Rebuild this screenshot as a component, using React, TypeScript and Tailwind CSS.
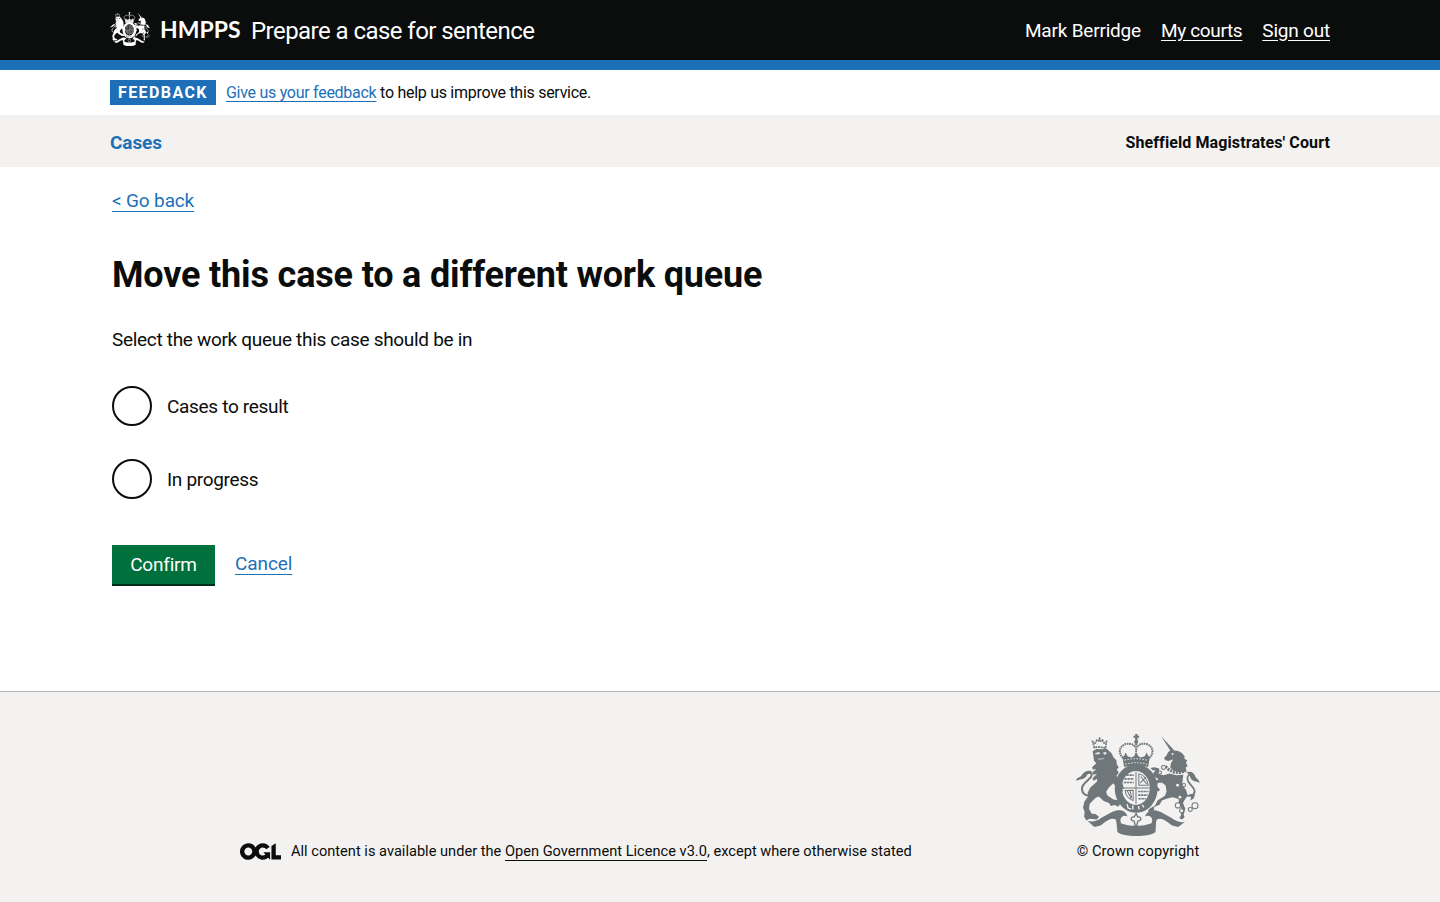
import React from 'react';

function Crest({ className, detail }: { className: string; detail: string }) {
  return (
    <svg className={className} viewBox="33 27 371 307" preserveAspectRatio="none" fill="currentColor" aria-hidden="true">
      {/* crown */}
      <path d="M210 27h7v5h5v6h-5v9h-7v-9h-5v-6h5z" />
      <circle cx="213" cy="51" r="6" />
      <g fill="none" stroke="currentColor" strokeWidth="6" strokeDasharray="5 2">
        <path d="M174 99c-16-14-12-36 8-42c14-3 25 2 28 10" />
        <path d="M252 99c16-14 12-36-8-42c-14-3-25 2-28 10" />
        <path d="M213 56v34" />
      </g>
      <path d="M172 96l5-3 4-10 7 12 12 3 7-5 6-10 6 10 7 5 12-3 7-12 4 10 5 3-5 30c-24-7-48-7-72 0z" />
      <path d="M178 106c23-6 47-6 70 0M180 118c22-6 44-6 66 0" fill="none" stroke={detail} strokeWidth="3" strokeDasharray="5 4" opacity=".8" />
      {/* garter and shield */}
      <path fillRule="evenodd" d="M213 118a64 73 0 1 0 .1 0zM212 138a42 51 0 1 1-.1 0z" />
      <path d="M211 141h3v96h-3zM170 188h85v3h-85z" />
      <g fill="none" stroke="currentColor" strokeWidth="5">
        <path d="M184 151h22M178 162h28M176 173h30M219 200h31M219 211h29M220 222h22" strokeDasharray="7 2" />
        <path d="M221 147c12 2 24 12 28 34h-28zM225 175l17-18M227 155l17 22" strokeWidth="3" />
        <path d="M180 197c2 17 8 25 24 30v-31zM186 197l12 25M194 197l6 22" strokeWidth="3" />
      </g>
      <path d="M177 234l20 9 30 0 14-6 3 14-16 8-20 1-28-8z" />
      <path d="M186 238l3 12 9 3m5-11v12m17-10l2 10m9-14l5 8" fill="none" stroke={detail} strokeWidth="4" />
      {/* lion */}
      <path d="M88 68l-5-18 8 4 5-9 8 5 8-5 5 9 7-4-3 20c-11-4-22-5-33-2z" fill="none" stroke="currentColor" strokeWidth="5" strokeDasharray="6 2" />
      <path d="M101 37h5v10h-5z" />
      <path d="M83 78l12-6 18 1 11-2 8 7 8 8 5 11 9 9 1 12 6 10-6 5 6 11-7 9 7 14 11 8 5 18-5-2 2 11-8-7-5 6-8-12-8-14-13 12-9 14 4 11 18 12 12 2 8 12-6 8-10-5-12 3-5-9-16-6-15-14-9 4-18 18-2 16 8 14 11 1 11 8-7 8-21-2-10 5-7-12 2-14-5-12 4-18 11-16-1-12 8-15 20-18 0-8-11 6-3-7 14-14-10 3-5-6 12-11-10 1-2-7 13-12-7-7z" />
      <path d="M90 85l10-4 7 4-8 4-8-1zM114 82l8-1 4 5-9 4z" fill={detail} opacity=".85" />
      <path d="M97 101l20-2 1 3-16 3z" fill={detail} opacity=".5" />
      <path d="M72 213c-14-1-21-10-21-22c0-18 28-27 29-41c0-9-11-8-21-1" fill="none" stroke="currentColor" strokeWidth="6" />
      <path d="M82 139c-18-6-27 5-32 12c-5 8-15 5-17 17c10-5 22-2 30-12c4-8 5-11 19-17z" />
      {/* unicorn */}
      <path d="M288 34l35 38-7 6z" />
      <path d="M309 81l7-5 4-6 7 7 12 1 11 6 8 10-1 7 9 6-4 6 5 11-6 4 3 12-10 2-17-1-13-4-9-9 2-13 7-12-14 5-9-2-5-6 8-9z" />
      <circle cx="322" cy="87" r="3" fill={detail} />
      <path d="M301 125l11 10 15 7 18 1 14-4" fill="none" stroke="currentColor" strokeWidth="9" strokeDasharray="6 3" />
      <path d="M296 151l16-5 22 5 20-1-2 16-1 14 12 17 4 15-9 14-5 9 7 17-5 19 3 6-7 7-9-4 5-8 2-21-9-16 1-12-19-6-18 5-14 5-7 13-16 7-1 9-9 6-9-3 6-8 15-8 8-16 22-14 5-13-3-18-10-8-13 0-3 10 9 10-3 6-10-5-6-16 4-10 11-6-13-8-3-10 7-9-9 0-6-7 11-2 15 4-1 9-4 7z" />
      <g fill={detail} stroke="currentColor" strokeWidth="3">
        <circle cx="295" cy="128" r="6" /><circle cx="284" cy="143" r="5" /><circle cx="337" cy="181" r="6" />
        <circle cx="356" cy="181" r="5" /><circle cx="344" cy="217" r="6" /><circle cx="338" cy="242" r="8" />
        <circle cx="349" cy="258" r="6" /><circle cx="375" cy="254" r="6" /><circle cx="389" cy="243" r="9" />
      </g>
      <path d="M361 212c20 5 30-5 26-17c-5-14-25-22-20-39c3-9 12-9 20-2" fill="none" stroke="currentColor" strokeWidth="5" />
      <path d="M363 143c15-6 24 2 27 12c4 8 11 8 13 19c-12-6-20-3-27-14c-3-8-4-11-13-17zM369 207l9 6-3 14 10-6 4-12z" />
      {/* fleur and ribbon */}
      <path d="M213 266l5 11c9-3 13 8 4 11l-4 1-3 14h-5l-3-14-4-1c-9-3-5-14 4-11z" fill="none" stroke="currentColor" strokeWidth="4" />
      <path d="M67 288c14 5 28 2 42-9l33-18c19-9 40-6 45 14c-10-5-21 1-21 11l3 21-11-8-6-15c-17-6-28 6-42 16c-8 5-17 6-23 6z" />
      <path d="M358 292c-14 2-26-3-40-13l-33-18c-19-9-40-6-45 14c10-5 21 1 21 11l-3 21 11-8 6-15c17-6 28 6 42 16c8 5 17 6 23 6z" />
      <path d="M153 284c18 26 102 26 120 0l-2 38c-16 16-98 16-114 0z" />
    </svg>
  );
}

function OglLogo() {
  return (
    <svg className="h-[17px] w-[41px] shrink-0" viewBox="0 0 483.2 195.7" fill="currentColor" aria-hidden="true">
      <path d="M421.5 142.8V.1l-50.7 32.3v161.1h112.4v-50.7zm-122.3-9.6A47.12 47.12 0 0 1 221 97.8c0-26 21.1-47.1 47.1-47.1 16.7 0 31.4 8.7 39.7 21.8l42.7-27.2A97.63 97.63 0 0 0 268.1 0c-36.5 0-68.3 20.1-85.1 49.7A98 98 0 0 0 97.8 0C43.9 0 0 43.9 0 97.8s43.9 97.8 97.8 97.8c36.5 0 68.3-20.1 85.1-49.7a97.76 97.76 0 0 0 149.6 25.4l19.4 22.2h3v-87.8h-80l24.3 27.5zM97.8 145c-26 0-47.1-21.1-47.1-47.1s21.1-47.1 47.1-47.1 47.1 21.1 47.1 47.1S123.8 145 97.8 145" />
    </svg>
  );
}

function Radio({ label }: { label: string }) {
  return (
    <label className="flex h-10 items-center gap-[15px]">
      <input type="radio" name="queue" className="size-10 shrink-0 appearance-none rounded-full border-2 border-[#0b0c0c]" />
      <span className="tracking-[-0.32px]">{label}</span>
    </label>
  );
}

export default function App() {
  return (
    <div className="flex h-[902px] flex-col bg-white font-['Roboto',sans-serif] text-[19px] leading-[25px] whitespace-nowrap text-[#0b0c0c]">
      <header className="h-[70px] shrink-0 border-b-10 border-[#1d70b8] bg-[#0b0c0c] text-white">
        <div className="mx-auto flex h-[60px] w-[1220px] items-center">
          <Crest className="mb-[2px] h-[34px] w-10" detail="#0b0c0c" />
          <span className="ml-[10px] w-[81px] pb-px font-['Lato',sans-serif] text-[23px] font-bold">HMPPS</span>
          <span className="ml-[10px] pt-[3px] text-[24px] tracking-[-0.55px]">Prepare a case for sentence</span>
          <nav className="ml-auto flex gap-5 tracking-[-0.2px]">
            <span>Mark Berridge</span>
            <a href="#" className="tracking-[-0.35px] underline underline-offset-3">My courts</a>
            <a href="#" className="underline underline-offset-3">Sign out</a>
          </nav>
        </div>
      </header>

      <div className="mx-auto flex h-[45px] w-[1220px] shrink-0 items-center">
        <strong className="flex h-[25px] w-[106px] items-center bg-[#1d70b8] pl-[8px] text-[16px] font-bold tracking-[1.4px] text-white">FEEDBACK</strong>
        <p className="ml-[10px] text-[16px] tracking-[-0.28px]">
          <a href="#" className="text-[#1d70b8] underline underline-offset-3">Give us your feedback</a> to help us improve this service.
        </p>
      </div>

      <div className="h-[52px] shrink-0 bg-[#f3f2f1]">
        <div className="mx-auto flex h-full w-[1220px] items-center justify-between pt-[3px] font-bold">
          <a href="#" className="tracking-[-0.1px] text-[#1d70b8]">Cases</a>
          <span className="text-[16px] tracking-[0.1px]">Sheffield Magistrates' Court</span>
        </div>
      </div>

      <main className="ml-28 flex flex-1 flex-col items-start pt-[21px]">
        <a href="#" className="tracking-[-0.15px] text-[#1d70b8] underline underline-offset-4">&lt; Go back</a>
        <h1 className="mt-[41px] text-[36px] leading-[42px] font-bold tracking-[-0.17px]">Move this case to a different work queue</h1>
        <p className="mt-[31px] tracking-[-0.31px]">Select the work queue this case should be in</p>
        <div className="mt-[34px] flex flex-col gap-[33px]">
          <Radio label="Cases to result" />
          <Radio label="In progress" />
        </div>
        <div className="mt-[46px] flex items-center gap-5">
          <button className="h-[41px] w-[103px] border-b-2 border-[#002d18] bg-[#00703c] tracking-[-0.2px] text-white">Confirm</button>
          <a href="#" className="mb-[5px] tracking-[-0.1px] text-[#1d70b8] underline underline-offset-4">Cancel</a>
        </div>
      </main>

      <footer className="h-[211px] shrink-0 border-t border-[#b1b4b6] bg-[#f3f2f1] text-[14px] leading-5">
        <div className="mx-auto flex h-[169px] w-[960px] items-end justify-between">
          <div className="flex items-center gap-[10px]">
            <OglLogo />
            <span className="text-[14.6px] tracking-[0.01px]">
              All content is available under the <a href="#" className="underline underline-offset-4">Open Government Licence v3.0</a>, except where otherwise stated
            </span>
          </div>
          <div className="flex w-[124px] flex-col items-center">
            <Crest className="mb-[5px] h-[102px] w-[124px] text-[#6f777b]" detail="#f3f2f1" />
            <span className="text-[14.6px] tracking-[0.1px]">© Crown copyright</span>
          </div>
        </div>
      </footer>
    </div>
  );
}
